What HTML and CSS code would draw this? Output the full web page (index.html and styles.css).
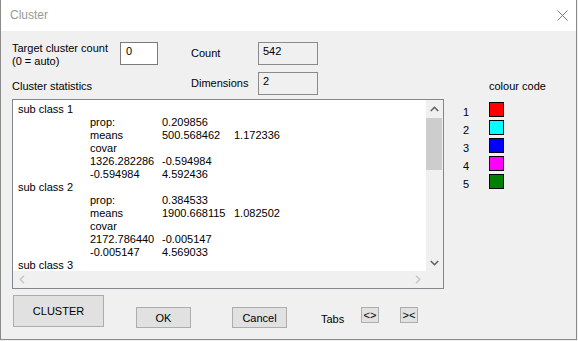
FILE: index.html
```html
<!DOCTYPE html>
<html lang="en">
<head>
  <meta charset="UTF-8">
  <title>Cluster</title>
  <link rel="stylesheet" href="styles.css">
</head>
<body>

  <div class="dialog">
    <div class="titlebar">
      <span class="title">Cluster</span>
      <svg class="close" width="11" height="11" viewBox="0 0 11 11">
        <path d="M0.5 0.5 L10.5 10.5 M10.5 0.5 L0.5 10.5" stroke="#7a7a7a" stroke-width="1" fill="none"/>
      </svg>
    </div>

    <div class="content">
      <!-- parametres en haut -->
      <div class="top">
        <div class="target-label">Target cluster count<br>(0 = auto)</div>
        <div class="field">0</div>
        <div></div>
        <div class="mid-label">Count</div>
        <div class="field readonly">542</div>
        <div></div>
        <div></div>

        <div class="stats-label">Cluster statistics</div>
        <div></div>
        <div></div>
        <div class="mid-label">Dimensions</div>
        <div class="field readonly">2</div>
        <div></div>
        <div class="stats-label">colour code</div>
      </div>

      <div class="main">
        <div class="listbox">
          <div class="list-text">
            <div class="line">sub class 1</div>
            <div class="line"><span></span><span>prop:</span><span>0.209856</span></div>
            <div class="line"><span></span><span>means</span><span>500.568462</span><span>1.172336</span></div>
            <div class="line"><span></span><span>covar</span></div>
            <div class="line"><span></span><span>1326.282286</span><span>-0.594984</span></div>
            <div class="line"><span></span><span>-0.594984</span><span>4.592436</span></div>
            <div class="line">sub class 2</div>
            <div class="line"><span></span><span>prop:</span><span>0.384533</span></div>
            <div class="line"><span></span><span>means</span><span>1900.668115</span><span>1.082502</span></div>
            <div class="line"><span></span><span>covar</span></div>
            <div class="line"><span></span><span>2172.786440</span><span>-0.005147</span></div>
            <div class="line"><span></span><span>-0.005147</span><span>4.569033</span></div>
            <div class="line">sub class 3</div>
          </div>
          <div class="vscroll">
            <div class="arrow">
              <svg width="9" height="6" viewBox="0 0 9 6"><path d="M0.8 5 L4.5 1.3 L8.2 5" stroke="#606060" stroke-width="1.6" fill="none"/></svg>
            </div>
            <div class="thumb"></div>
            <div class="spacer"></div>
            <div class="arrow">
              <svg width="9" height="6" viewBox="0 0 9 6"><path d="M0.8 1 L4.5 4.7 L8.2 1" stroke="#606060" stroke-width="1.6" fill="none"/></svg>
            </div>
          </div>
          <div class="hscroll">
            <div class="arrow">
              <svg width="6" height="9" viewBox="0 0 6 9"><path d="M5 0.8 L1.3 4.5 L5 8.2" stroke="#c8c8c8" stroke-width="1.6" fill="none"/></svg>
            </div>
            <div class="arrow">
              <svg width="6" height="9" viewBox="0 0 6 9"><path d="M1 0.8 L4.7 4.5 L1 8.2" stroke="#c8c8c8" stroke-width="1.6" fill="none"/></svg>
            </div>
          </div>
          <div class="corner"></div>
        </div>

        <div class="colours">
          <span class="num">1</span><span class="swatch red"></span>
          <span class="num">2</span><span class="swatch cyan"></span>
          <span class="num">3</span><span class="swatch blue"></span>
          <span class="num">4</span><span class="swatch magenta"></span>
          <span class="num">5</span><span class="swatch green"></span>
        </div>
      </div>

      <div class="bottom">
        <button class="btn cluster-btn">CLUSTER</button>
        <button class="btn ok-btn">OK</button>
        <button class="btn cancel-btn">Cancel</button>
        <span class="tabs-label">Tabs</span>
        <button class="btn small-btn">&lt;&gt;</button>
        <button class="btn small-btn second">&gt;&lt;</button>
      </div>
    </div>
  </div>

</body>
</html>
```

FILE: styles.css
```css
body {
  margin: 0;
  background: #f0f0f0;
  font-family: 'Liberation Sans', Arial, sans-serif;
  font-size: 11px;
  line-height: 13px;
  color: #000;
}
.dialog {
  box-sizing: border-box;
  width: 577px;
  height: 340px;
  background: #f0f0f0;
  border: 1px solid #8a8a8a;
  border-top: none;
}
.titlebar {
  height: 31px;
  background: #fff;
  display: flex;
  align-items: center;
  justify-content: space-between;
  padding: 0 8px 0 9px;
}
.title {
  font-size: 12px;
  color: #999;
}
.close {
  display: block;
}
.content {
  padding: 11px 0 0 11px;
}
.top {
  display: grid;
  grid-template-columns: 108px 38px 33px 67px 60px 171px auto;
  grid-template-rows: 23px 23px;
  row-gap: 7px;
}
.target-label {
  align-self: start;
  white-space: nowrap;
}
.mid-label {
  align-self: center;
}
.stats-label {
  align-self: end;
  margin-bottom: 2px;
  white-space: nowrap;
}
.field {
  box-sizing: border-box;
  border: 1px solid #7a7a7a;
  background: #fff;
  padding: 2px 0 0 5px;
}
.field.readonly {
  background: #f0f0f0;
  border-color: #8a8a8a;
  padding-left: 4px;
}
.main {
  display: flex;
  margin-top: 4px;
}
.listbox {
  box-sizing: border-box;
  width: 432px;
  height: 190px;
  border: 1px solid #828790;
  display: grid;
  grid-template-columns: 413px 17px;
  grid-template-rows: 171px 17px;
}
.list-text {
  background: #fff;
  overflow: hidden;
  padding: 3px 0 0 5px;
}
.line {
  display: grid;
  grid-template-columns: 72px 72px 72px 72px;
  white-space: nowrap;
}
.vscroll {
  background: #f0f0f0;
  display: flex;
  flex-direction: column;
}
.vscroll .arrow {
  height: 17px;
  display: flex;
  align-items: center;
  justify-content: center;
}
.thumb {
  height: 52px;
  width: 16px;
  margin-top: 1px;
  background: #cdcdcd;
}
.spacer {
  flex: 1;
}
.hscroll {
  background: #f0f0f0;
  display: flex;
  justify-content: space-between;
}
.hscroll .arrow {
  width: 17px;
  display: flex;
  align-items: center;
  justify-content: center;
}
.corner {
  background: #f0f0f0;
}
.colours {
  display: grid;
  grid-template-columns: 26px 15px;
  grid-auto-rows: 15px;
  row-gap: 3px;
  padding: 3px 0 0 19px;
}
.num {
  margin-top: 4px;
}
.swatch {
  box-sizing: border-box;
  border: 1px solid #000;
}
.red { background: #ff0000; }
.cyan { background: #00ffff; }
.blue { background: #0000ff; }
.magenta { background: #ff00ff; }
.green { background: #008000; }
.bottom {
  display: flex;
  align-items: flex-start;
  margin-top: 6px;
}
.btn {
  box-sizing: border-box;
  font-family: 'Liberation Sans', Arial, sans-serif;
  font-size: 11px;
  color: #000;
  background: #e1e1e1;
  border: 1px solid #adadad;
  padding: 0;
}
.cluster-btn {
  width: 91px;
  height: 32px;
  margin-left: 1px;
}
.ok-btn {
  width: 55px;
  height: 21px;
  margin: 12px 0 0 32px;
}
.cancel-btn {
  width: 55px;
  height: 21px;
  margin: 12px 0 0 41px;
}
.tabs-label {
  width: 40px;
  margin: 18px 0 0 34px;
}
.small-btn {
  width: 18px;
  height: 16px;
  margin-top: 12px;
  line-height: 14px;
}
.small-btn.second {
  margin-left: 21px;
}
```
